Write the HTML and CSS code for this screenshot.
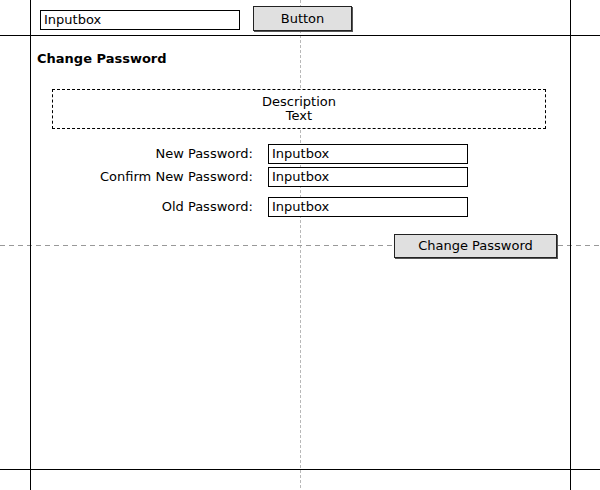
FILE: index.html
```html
<!DOCTYPE html>
<html>
<head>
<meta charset="utf-8">
<link rel="stylesheet" href="styles.css">
</head>
<body>
<div class="page">
  <div class="guide v-mid"></div>
  <div class="guide h-mid"></div>
  <div class="topbar">
    <div class="input top-input">Inputbox</div>
    <div class="btn top-btn">Button</div>
  </div>
  <div class="main">
    <h1 class="title">Change Password</h1>
    <div class="desc">Description<br>Text</div>
    <div class="form">
      <div class="label">New Password:</div>
      <div class="input field">Inputbox</div>
      <div class="label">Confirm New Password:</div>
      <div class="input field">Inputbox</div>
      <div class="label old">Old Password:</div>
      <div class="input field old">Inputbox</div>
    </div>
    <div class="actions">
      <div class="btn submit">Change Password</div>
    </div>
  </div>
  <div class="guide v-left"></div>
  <div class="guide v-right"></div>
  <div class="guide h-top"></div>
  <div class="guide h-bottom"></div>
</div>
</body>
</html>
```
FILE: styles.css
```css
html, body {
  margin: 0;
  padding: 0;
  background: #fff;
}
body {
  font-family: "DejaVu Sans", Verdana, sans-serif;
  font-size: 13px;
  color: #000;
}
.page {
  position: relative;
  width: 600px;
  height: 490px;
  overflow: hidden;
}
.topbar, .main {
  position: relative;
}
.topbar {
  display: flex;
  align-items: flex-start;
  padding-left: 40px;
  height: 35px;
}
.input {
  box-sizing: border-box;
  width: 200px;
  height: 20px;
  border: 1px solid #000;
  background: #fff;
  padding-left: 3px;
  line-height: 18px;
  font-size: 13px;
}
.top-input {
  margin-top: 10px;
}
.btn {
  box-sizing: border-box;
  background: #e0e0e0;
  border: 1px solid #222;
  box-shadow: 1px 1px 0 #555;
  text-align: center;
  font-size: 13px;
}
.top-btn {
  margin-top: 6px;
  margin-left: 13px;
  width: 99px;
  height: 25px;
  line-height: 23px;
}
.main {
  padding-top: 17px;
}
.title {
  margin: 0 0 23px 37px;
  font-size: 13px;
  font-weight: bold;
  line-height: 14px;
}
.desc {
  box-sizing: border-box;
  margin-left: 52px;
  width: 494px;
  height: 40px;
  border: 1px dashed #000;
  background: #fff;
  text-align: center;
  font-size: 13px;
  line-height: 14px;
  padding-top: 5px;
}
.form {
  display: grid;
  grid-template-columns: 253px 200px;
  column-gap: 15px;
  row-gap: 3px;
  margin-top: 15px;
}
.label {
  text-align: right;
  line-height: 20px;
}
.old {
  margin-top: 7px;
}
.actions {
  display: flex;
  justify-content: flex-end;
  width: 557px;
  margin-top: 17px;
}
.submit {
  width: 163px;
  height: 24px;
  line-height: 22px;
}
.guide {
  position: absolute;
}
.v-left {
  left: 30px;
  top: 0;
  width: 1px;
  height: 490px;
  background: #000;
}
.v-right {
  left: 570px;
  top: 0;
  width: 1px;
  height: 490px;
  background: #000;
}
.h-top {
  left: 0;
  top: 35px;
  width: 600px;
  height: 1px;
  background: #000;
}
.h-bottom {
  left: 0;
  top: 469px;
  width: 600px;
  height: 1px;
  background: #000;
}
.v-mid {
  left: 300px;
  top: 0;
  width: 1px;
  height: 490px;
  background: repeating-linear-gradient(to bottom, #b8b8b8 0 3px, transparent 3px 5px);
}
.h-mid {
  left: 0;
  top: 245px;
  width: 600px;
  height: 1px;
  background: repeating-linear-gradient(to right, #999 0 5px, transparent 5px 9px);
}
```
